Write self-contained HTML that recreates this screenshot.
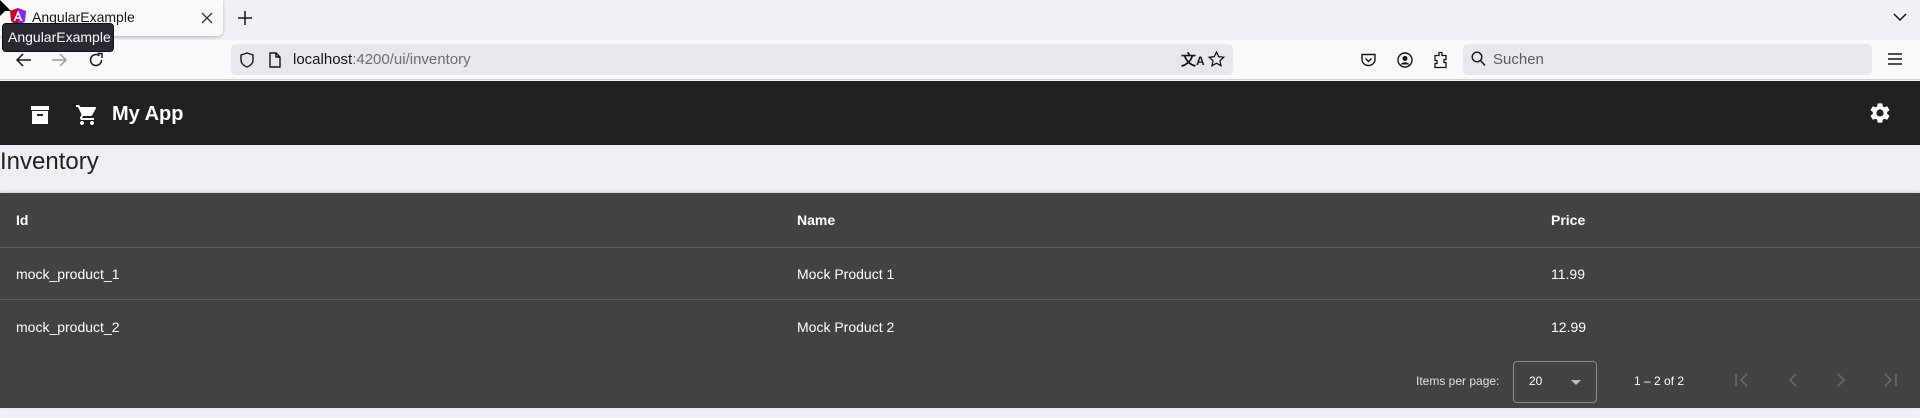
<!DOCTYPE html>
<html><head><meta charset="utf-8">
<style>
*{margin:0;padding:0;box-sizing:border-box}
body{width:1920px;height:418px;overflow:hidden;background:#eff0f3;font-family:"Liberation Sans","DejaVu Sans",sans-serif;position:relative}
.abs{position:absolute}
svg{display:block}
.t{font-size:14px;color:#fff;position:absolute}
.hd{font-weight:bold}
</style></head><body>
<div class="abs" style="left:0;top:0;width:1920px;height:40px;background:#eff0f3"></div>
<div class="abs" style="left:0;top:0;width:223px;height:36px;background:#f9f9fb;border-radius:0 0 6px 0;box-shadow:0 1px 3px rgba(0,0,0,.25)"></div>
<svg class="abs" style="left:10px;top:8px" width="16" height="18" viewBox="0 0 16 18"><path d="M8 0L0 3l1.2 10.5L8 18l6.8-4.5L16 3z" fill="#c3002f"/><path d="M8 0L16 3l-1.2 10.5L8 18z" fill="#8a2be2"/><path d="M8 2.5L3.5 13h1.7l.9-2.3h3.8l.9 2.3h1.7z M6.7 9.2L8 6l1.3 3.2z" fill="#fff"/></svg>
<div class="abs" style="left:32px;top:9px;font-size:14px;color:#15141a">AngularExample</div>
<svg class="abs" style="left:201px;top:12px" width="12" height="12"><path d="M1 1L11 11M11 1L1 11" stroke="#333" stroke-width="1.3"/></svg>
<svg class="abs" style="left:238px;top:11px" width="14" height="14"><path d="M7 0V14M0 7H14" stroke="#15141a" stroke-width="1.5"/></svg>
<svg class="abs" style="left:1893px;top:13px" width="14" height="9"><path d="M1 1L7 7L13 1" stroke="#15141a" stroke-width="1.5" fill="none"/></svg>
<div class="abs" style="left:0;top:40px;width:1920px;height:40px;background:#f9f9fb;border-bottom:1px solid #cfcfd8"></div>
<svg class="abs" style="left:16px;top:53px" width="16" height="14"><path d="M15 7H2M7 1L1 7L7 13" stroke="#15141a" stroke-width="1.5" fill="none"/></svg>
<svg class="abs" style="left:51px;top:53px" width="16" height="14"><path d="M1 7H14M9 1L15 7L9 13" stroke="#9a9aa0" stroke-width="1.5" fill="none"/></svg>
<svg class="abs" style="left:88px;top:52px" width="16" height="16"><path d="M13.5 8A5.5 5.5 0 1 1 11.5 3.8" stroke="#15141a" stroke-width="1.5" fill="none"/><path d="M9.5 1.5H14V6" stroke="#15141a" stroke-width="1.5" fill="none"/></svg>
<div class="abs" style="left:231px;top:44px;width:1002px;height:31px;background:#e7e8ec;border-radius:5px"></div>
<svg class="abs" style="left:240px;top:52px" width="14" height="16"><path d="M7 1L1 3v5c0 3.5 3 6 6 7 3-1 6-3.5 6-7V3z" stroke="#15141a" stroke-width="1.4" fill="none"/></svg>
<svg class="abs" style="left:269px;top:52px" width="12" height="16"><path d="M1 1h6l4 4v10H1z M7 1v4h4" stroke="#15141a" stroke-width="1.4" fill="none"/></svg>
<div class="abs" style="left:293px;top:51px;font-size:15px;color:#15141a">localhost<span style="color:#6d6d75">:4200/ui/inventory</span></div>
<div class="abs" style="left:1181px;top:49px;font-size:15px;color:#15141a;font-weight:bold">文<span style="font-size:12px">A</span></div>
<svg class="abs" style="left:1208px;top:51px" width="17" height="17" viewBox="0 0 17 17"><path d="M8.5 1l2.2 4.7 5 .6-3.7 3.4 1 5-4.5-2.5-4.5 2.5 1-5L1.3 6.3l5-.6z" stroke="#15141a" stroke-width="1.3" fill="none"/></svg>
<svg class="abs" style="left:1361px;top:53px" width="15" height="14"><path d="M1 1.5h13v5a6.5 6 0 0 1-13 0z M4.5 5.5L7.5 8.5 10.5 5.5" stroke="#15141a" stroke-width="1.4" fill="none"/></svg>
<svg class="abs" style="left:1397px;top:52px" width="16" height="16"><circle cx="8" cy="8" r="7" stroke="#15141a" stroke-width="1.4" fill="none"/><circle cx="8" cy="6.5" r="2.5" fill="#15141a"/><path d="M3.5 12.5c1.5-3 7.5-3 9 0" fill="#15141a"/></svg>
<svg class="abs" style="left:1433px;top:51px" width="15" height="18"><path d="M6 1.5h3v3h4v4h-2v3h2v5H2v-4h2v-3H2v-5h4z" stroke="#15141a" stroke-width="1.3" fill="none"/></svg>
<div class="abs" style="left:1463px;top:44px;width:409px;height:31px;background:#e7e8ec;border-radius:5px"></div>
<svg class="abs" style="left:1471px;top:51px" width="15" height="16"><circle cx="6" cy="6" r="4.8" stroke="#15141a" stroke-width="1.4" fill="none"/><path d="M9.5 9.5L14 14.5" stroke="#15141a" stroke-width="1.5"/></svg>
<div class="abs" style="left:1493px;top:51px;font-size:15px;color:#5b5b66">Suchen</div>
<svg class="abs" style="left:1888px;top:53px" width="14" height="12"><path d="M0 1H14M0 6H14M0 11H14" stroke="#15141a" stroke-width="1.4"/></svg>
<div class="abs" style="left:2px;top:23px;width:112px;height:29px;background:#2b2a33;border:1px solid #111;border-radius:4px;color:#fbfbfe;font-size:14px;line-height:27px;padding-left:5px">AngularExample</div>
<svg class="abs" style="left:0;top:0" width="12" height="16"><path d="M0 0L11 11H5L0 16z" fill="#000"/></svg>
<div class="abs" style="left:0;top:81px;width:1920px;height:64px;background:#212121"></div>
<svg class="abs" style="left:28px;top:103px" width="24" height="24" viewBox="0 0 24 24"><path fill="#fff" d="M3 3h18v4H3z M4 8h16v13H4z" /><rect x="9" y="11" width="6" height="2" fill="#212121"/></svg>
<svg class="abs" style="left:75px;top:103px" width="24" height="24" viewBox="0 0 24 24"><path fill="#fff" d="M7 18c-1.1 0-2 .9-2 2s.9 2 2 2 2-.9 2-2-.9-2-2-2zM1 2v2h2l3.6 7.59-1.35 2.45c-.16.28-.25.61-.25.96 0 1.1.9 2 2 2h12v-2H7.42c-.14 0-.25-.11-.25-.25l.03-.12.9-1.63h7.45c.75 0 1.41-.41 1.75-1.03l3.58-6.49A1 1 0 0 0 20 4H5.21l-.94-2H1zm16 16c-1.1 0-2 .9-2 2s.9 2 2 2 2-.9 2-2-.9-2-2-2z"/></svg>
<div class="abs" style="left:112px;top:103px;font-size:20px;color:#fff;font-weight:bold">My App</div>
<svg class="abs" style="left:1868px;top:101px" width="24" height="24" viewBox="0 0 24 24"><path fill="#fff" d="M19.14 12.94c.04-.3.06-.61.06-.94 0-.32-.02-.64-.07-.94l2.03-1.58a.49.49 0 0 0 .12-.61l-1.92-3.32a.49.49 0 0 0-.59-.22l-2.39.96c-.5-.38-1.030-.7-1.62-.94l-.36-2.54a.48.48 0 0 0-.48-.41h-3.840c-.24 0-.43.17-.47.41l-.36 2.54c-.59.24-1.13.57-1.62.94l-2.39-.96a.48.48 0 0 0-.59.22L2.74 8.87c-.12.21-.08.47.12.61l2.03 1.58c-.05.3-.09.63-.09.94s.02.64.07.94l-2.03 1.58a.49.49 0 0 0-.12.61l1.92 3.32c.12.22.37.29.59.22l2.39-.96c.5.38 1.03.7 1.62.94l.36 2.54c.05.24.24.41.48.41h3.84c.24 0 .44-.17.47-.41l.36-2.54c.59-.24 1.13-.56 1.62-.94l2.39.96c.22.08.47 0 .59-.22l1.92-3.32c.12-.22.07-.47-.12-.61l-2.01-1.58zM12 15.6A3.6 3.6 0 1 1 12 8.4a3.6 3.6 0 0 1 0 7.2z"/></svg>
<div class="abs" style="left:0;top:148px;font-size:24px;color:#212121">Inventory</div>
<div class="abs" style="left:0;top:193px;width:1920px;height:215px;background:#424242;box-shadow:0 -1px 4px rgba(0,0,0,.15)"></div>
<div class="abs" style="left:0;top:247px;width:1920px;height:1px;background:#5e5e5e"></div>
<div class="abs" style="left:0;top:299px;width:1920px;height:1px;background:#5e5e5e"></div>
<div class="t hd" style="left:16px;top:212px">Id</div>
<div class="t hd" style="left:797px;top:212px">Name</div>
<div class="t hd" style="left:1551px;top:212px">Price</div>
<div class="t" style="left:16px;top:266px">mock_product_1</div>
<div class="t" style="left:797px;top:266px">Mock Product 1</div>
<div class="t" style="left:1551px;top:266px">11.99</div>
<div class="t" style="left:16px;top:319px">mock_product_2</div>
<div class="t" style="left:797px;top:319px">Mock Product 2</div>
<div class="t" style="left:1551px;top:319px">12.99</div>
<div class="abs" style="left:1416px;top:374px;font-size:12px;color:#e0e0e0">Items per page:</div>
<div class="abs" style="left:1513px;top:361px;width:84px;height:42px;border:1px solid #8a8a8a;border-radius:4px"></div>
<div class="abs" style="left:1529px;top:374px;font-size:12px;color:#fff">20</div>
<svg class="abs" style="left:1571px;top:380px" width="10" height="5"><path d="M0 0H10L5 5z" fill="#bdbdbd"/></svg>
<div class="abs" style="left:1634px;top:374px;font-size:12px;color:#fff">1 – 2 of 2</div>
<svg class="abs" style="left:1735px;top:373px" width="14" height="14"><path d="M1 1V13M12 1L6 7L12 13" stroke="#6a6a6a" stroke-width="1.6" fill="none"/></svg>
<svg class="abs" style="left:1788px;top:373px" width="10" height="14"><path d="M8 1L2 7L8 13" stroke="#6a6a6a" stroke-width="1.6" fill="none"/></svg>
<svg class="abs" style="left:1836px;top:373px" width="10" height="14"><path d="M2 1L8 7L2 13" stroke="#6a6a6a" stroke-width="1.6" fill="none"/></svg>
<svg class="abs" style="left:1883px;top:373px" width="14" height="14"><path d="M13 1V13M2 1L8 7L2 13" stroke="#6a6a6a" stroke-width="1.6" fill="none"/></svg>
</body></html>
